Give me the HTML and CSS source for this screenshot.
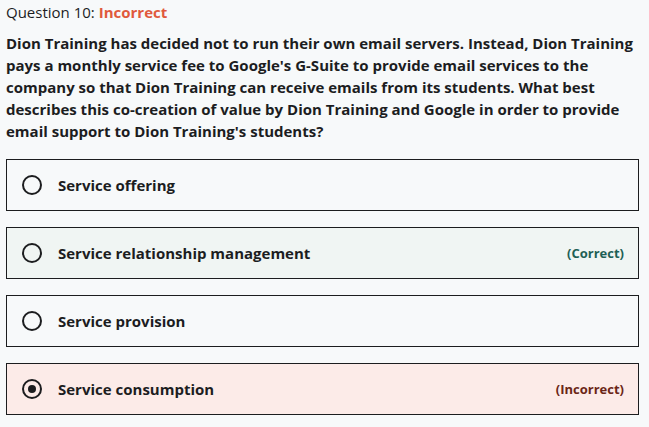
FILE: index.html
```html
<!DOCTYPE html>
<html>
<head>
<meta charset="utf-8">
<link rel="stylesheet" href="styles.css">
</head>
<body>
<div class="quiz">
  <div class="header">Question 10: <span class="status">Incorrect</span></div>
  <p class="prompt">Dion Training has decided not to run their own email servers. Instead, Dion Training pays a monthly service fee to Google's G-Suite to provide email services to the company so that Dion Training can receive emails from its students. What best describes this co-creation of value by Dion Training and Google in order to provide email support to Dion Training's students?</p>
  <ul class="options">
    <li class="option"><span class="radio"></span><span class="label">Service offering</span></li>
    <li class="option correct"><span class="radio"></span><span class="label">Service relationship management</span><span class="tag">(Correct)</span></li>
    <li class="option"><span class="radio"></span><span class="label">Service provision</span></li>
    <li class="option incorrect"><span class="radio checked"></span><span class="label">Service consumption</span><span class="tag">(Incorrect)</span></li>
  </ul>
</div>
</body>
</html>
```
FILE: styles.css
```css
html, body {
  margin: 0;
  padding: 0;
  background: #f7f9fa;
}
body {
  font-family: "Open Sans", "DejaVu Sans", sans-serif;
  color: #1c1d1f;
}
.quiz {
  padding: 2px 10px 0 6px;
}
.header {
  font-size: 15px;
  line-height: 20px;
  height: 20px;
}
.status {
  font-weight: 700;
  color: #e0593d;
}
.prompt {
  margin: 10px 0 0 0;
  font-size: 15px;
  font-weight: 700;
  line-height: 22px;
}
.options {
  list-style: none;
  margin: 17px 0 0 0;
  padding: 0;
  display: flex;
  flex-direction: column;
  gap: 16px;
}
.option {
  box-sizing: border-box;
  height: 52px;
  border: 1px solid #1c1d1f;
  display: flex;
  align-items: center;
  padding: 0 14px 0 15px;
  font-size: 15px;
  font-weight: 700;
}
.option.correct { background: #f0f5f3; }
.option.incorrect { background: #fcebe8; }
.radio {
  box-sizing: border-box;
  width: 20px;
  height: 20px;
  border: 2px solid #1c1d1f;
  border-radius: 50%;
  margin-right: 16px;
  flex: none;
  display: flex;
  align-items: center;
  justify-content: center;
}
.radio.checked::after {
  content: "";
  width: 8px;
  height: 8px;
  border-radius: 50%;
  background: #1c1d1f;
}
.label { flex: 1; }
.tag { font-size: 13px; }
.correct .tag { color: #1e6055; }
.incorrect .tag { color: #6b2617; }
```
